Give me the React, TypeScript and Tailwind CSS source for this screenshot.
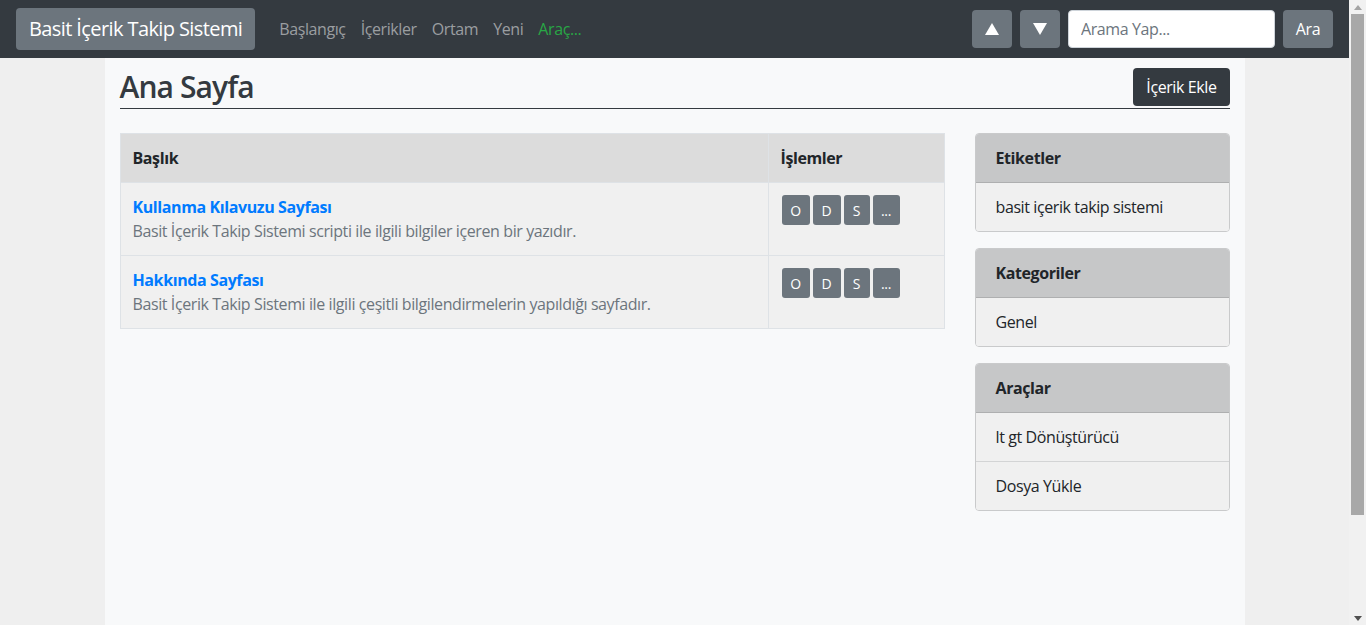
import React from "react";

const rows = [
  {
    title: "Kullanma Kılavuzu Sayfası",
    desc: "Basit İçerik Takip Sistemi scripti ile ilgili bilgiler içeren bir yazıdır.",
  },
  {
    title: "Hakkında Sayfası",
    desc: "Basit İçerik Takip Sistemi ile ilgili çeşitli bilgilendirmelerin yapıldığı sayfadır.",
  },
];

const actions = [
  { label: "O", w: "w-[28px]" },
  { label: "D", w: "w-[28px]" },
  { label: "S", w: "w-[26px]" },
  { label: "...", w: "w-[27px]" },
];

const cards = [
  { title: "Etiketler", items: ["basit içerik takip sistemi"] },
  { title: "Kategoriler", items: ["Genel"] },
  { title: "Araçlar", items: ["lt gt Dönüştürücü", "Dosya Yükle"] },
];

function Navbar() {
  return (
    <nav className="h-[58px] bg-[#343a40] flex items-center pl-4 pr-4">
      <a className="h-[42px] px-[13px] flex items-center rounded bg-[#6c757d] text-white text-[20px] tracking-[-0.03em]">
        Basit İçerik Takip Sistemi
      </a>
      <ul className="flex items-center gap-[15px] ml-6 text-[16px] text-[#9b9ea1]">
        <li>Başlangıç</li>
        <li>İçerikler</li>
        <li>Ortam</li>
        <li>Yeni</li>
        <li className="text-[#28a745]">Araç...</li>
      </ul>
      <div className="ml-auto flex items-center gap-2">
        <button className="w-10 h-[38px] rounded bg-[#6c757d] text-white flex items-center justify-center">
          <svg width="14" height="12" viewBox="0 0 14 12">
            <path d="M7 0 L14 12 L0 12 Z" fill="white" />
          </svg>
        </button>
        <button className="w-10 h-[38px] rounded bg-[#6c757d] text-white flex items-center justify-center">
          <svg width="14" height="12" viewBox="0 0 14 12">
            <path d="M0 0 L14 0 L7 12 Z" fill="white" />
          </svg>
        </button>
        <input
          placeholder="Arama Yap..."
          className="w-[207px] h-[38px] rounded bg-white border border-[#ced4da] px-3 text-[16px] placeholder:text-[#6c757d] outline-none"
        />
        <button className="w-[50px] h-[38px] rounded bg-[#6c757d] text-white text-[16px]">
          Ara
        </button>
      </div>
    </nav>
  );
}

function ContentTable() {
  return (
    <table className="self-start w-[825px] border-collapse border border-[#dee2e6] text-[16px]">
      <thead>
        <tr className="h-[49px] bg-[#dcdcdc] text-[#212529] font-bold text-left">
          <th className="px-3 border-r border-[#dee2e6]">Başlık</th>
          <th className="px-3 w-[176px]">İşlemler</th>
        </tr>
      </thead>
      <tbody>
        {rows.map((r) => (
          <tr key={r.title} className="h-[73px] bg-[#f0f0f0] border-t border-[#dee2e6] align-top">
            <td className="px-3 pt-[12px] border-r border-[#dee2e6]">
              <div className="text-[#007bff] font-bold leading-6">{r.title}</div>
              <div className="text-[#6c757d] leading-6">{r.desc}</div>
            </td>
            <td className="px-3 pt-3">
              <div className="flex gap-[3px] ml-px">
                {actions.map((b) => (
                  <button
                    key={b.label}
                    className={"h-[30px] rounded-[3px] bg-[#6c757d] text-white text-[14px] " + b.w}
                  >
                    {b.label}
                  </button>
                ))}
              </div>
            </td>
          </tr>
        ))}
      </tbody>
    </table>
  );
}

function Sidebar() {
  return (
    <aside className="w-[255px] flex flex-col gap-4">
      {cards.map((c) => (
        <div key={c.title} className="rounded border border-[#c9cacb] overflow-hidden">
          <div className="h-[49px] px-5 flex items-center bg-[#c6c7c8] border-b border-[#aeafb0] font-bold text-[#212529]">
            {c.title}
          </div>
          {c.items.map((it, i) => (
            <div
              key={it}
              className={
                "px-5 flex items-center bg-[#f0f0f0] text-[#212529] " +
                (i > 0 ? "h-[49px] border-t border-[#d3d4d5]" : "h-[48px]")
              }
            >
              {it}
            </div>
          ))}
        </div>
      ))}
    </aside>
  );
}

function Scrollbar() {
  return (
    <div className="w-[17px] h-[625px] bg-[#f1f1f1] flex flex-col items-center">
      <div className="h-[14px] flex items-center justify-center">
        <svg width="8" height="5" viewBox="0 0 8 5">
          <path d="M4 0 L8 5 L0 5 Z" fill="#a3a3a3" />
        </svg>
      </div>
      <div className="w-[13px] h-[501px] bg-[#a8a8a8]" />
      <div className="flex-1" />
      <div className="h-[14px] flex items-center justify-center">
        <svg width="8" height="5" viewBox="0 0 8 5">
          <path d="M0 0 L8 0 L4 5 Z" fill="#505050" />
        </svg>
      </div>
    </div>
  );
}

export default function App() {
  return (
    <div className="flex h-[625px] overflow-hidden bg-[#efefef] font-['Open_Sans',sans-serif] text-[16px] tracking-[-0.025em]">
      <div className="flex-1 flex flex-col">
        <Navbar />
        <main className="w-[1140px] mx-auto flex-1 bg-[#f8f9fa] px-[15px]">
          <div className="flex items-end justify-between border-b border-[#343a40] pt-[10px]">
            <h1 className="text-[30px] leading-[38px] font-semibold tracking-[-0.03em] text-[#343a40] pb-[2px]">
              Ana Sayfa
            </h1>
            <button className="h-[38px] px-[13px] mb-[2px] rounded bg-[#343a40] text-white text-[16px]">
              İçerik Ekle
            </button>
          </div>
          <div className="flex items-start gap-[30px] mt-[24px]">
            <ContentTable />
            <Sidebar />
          </div>
        </main>
      </div>
      <Scrollbar />
    </div>
  );
}
